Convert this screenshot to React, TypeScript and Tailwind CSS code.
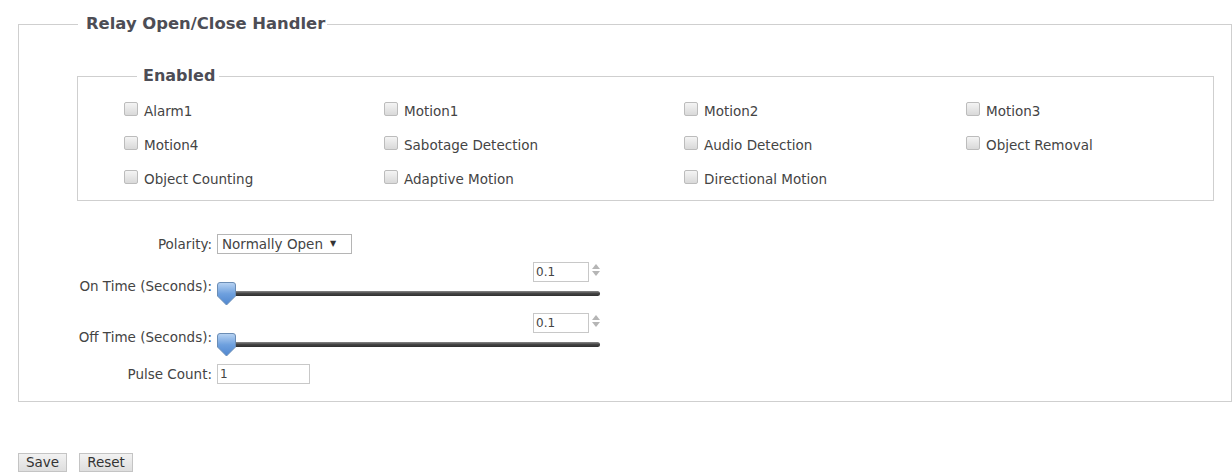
import React from 'react';

const events = [
  'Alarm1',
  'Motion1',
  'Motion2',
  'Motion3',
  'Motion4',
  'Sabotage Detection',
  'Audio Detection',
  'Object Removal',
  'Object Counting',
  'Adaptive Motion',
  'Directional Motion',
];

function Checkbox({ label }: { label: string }) {
  return (
    <label className="flex items-center h-[20px] gap-[6px] text-[#444]">
      <span className="w-[14px] h-[14px] rounded-[2px] border border-[#bcbcbc] bg-gradient-to-b from-[#f4f4f4] to-[#d9d9d9] shrink-0 -mt-[4px]" />
      <span>{label}</span>
    </label>
  );
}

function Spinner() {
  return (
    <span className="flex flex-col items-center gap-[2px] ml-[3px] mt-[-4px]">
      <svg width="8" height="5" viewBox="0 0 8 5">
        <path d="M0 5 L4 0 L8 5 Z" fill="#b5b5b5" />
      </svg>
      <svg width="8" height="5" viewBox="0 0 8 5">
        <path d="M0 0 L4 5 L8 0 Z" fill="#b5b5b5" />
      </svg>
    </span>
  );
}

function Thumb() {
  return (
    <svg width="19" height="24" viewBox="0 0 19 24" className="absolute left-0 top-0">
      <defs>
        <linearGradient id="thumbGrad" x1="0" y1="0" x2="0" y2="1">
          <stop offset="0" stopColor="#b9d4f3" />
          <stop offset="0.5" stopColor="#6ea0de" />
          <stop offset="1" stopColor="#4f86cf" />
        </linearGradient>
      </defs>
      <path
        d="M3 0.5 H16 Q18.5 0.5 18.5 3 V14 L9.5 23 L0.5 14 V3 Q0.5 0.5 3 0.5 Z"
        fill="url(#thumbGrad)"
        stroke="#6b8db5"
      />
    </svg>
  );
}

function TimeSlider({ label, value }: { label: string; value: string }) {
  return (
    <div className="flex items-end gap-[5px]">
      <span className="w-[193px] text-right mb-[11px] leading-[16px]">{label}</span>
      <div className="w-[384px] flex flex-col">
        <div className="flex justify-end items-center h-[20px] pr-[1px]">
          <input
            readOnly
            value={value}
            className="w-[56px] h-[20px] border border-[#c8c8c8] px-[2px] text-[12px] text-[#444] bg-white outline-none"
          />
          <Spinner />
        </div>
        <div className="relative h-[23px] flex items-center pl-[2px] pr-[1px]">
          <div className="w-full h-[5px] rounded-full bg-gradient-to-b from-[#8a8a8a] via-[#444] to-[#2f2f2f]" />
          <Thumb />
        </div>
      </div>
    </div>
  );
}

export default function App() {
  return (
    <div className="min-h-[476px] bg-white pl-[18px] pt-[14px] text-[13.5px] text-[#444] font-['DejaVu_Sans','Verdana',sans-serif]">
      <fieldset className="border border-[#cfcfcf] pb-[16px]">
        <legend className="ml-[59px] pl-[8px] pr-[2px] text-[16.4px] leading-[20px] font-bold text-[#4d4d55]">
          Relay Open/Close Handler
        </legend>

        <fieldset className="mt-[32px] ml-[58px] mr-[17px] border border-[#cfcfcf] pl-[46px] pt-[15px] pb-[11px]">
          <legend className="ml-[13px] pl-[6px] pr-[4px] text-[16px] leading-[20px] font-bold text-[#4d4d55]">
            Enabled
          </legend>
          <div className="grid grid-cols-[260px_300px_282px_1fr] gap-y-[14px]">
            {events.map((e) => (
              <Checkbox key={e} label={e} />
            ))}
          </div>
        </fieldset>

        <div className="mt-[33px] flex flex-col gap-[8px]">
          <div className="flex items-center gap-[5px]">
            <span className="w-[193px] text-right">Polarity:</span>
            <div className="w-[135px] h-[20px] border border-[#b5b5b5] bg-white flex items-center gap-[7px] px-[4px]">
              <span>Normally Open</span>
              <span className="text-[8px] text-[#333]">▼</span>
            </div>
          </div>

          <TimeSlider label="On Time (Seconds):" value="0.1" />
          <TimeSlider label="Off Time (Seconds):" value="0.1" />

          <div className="flex items-center gap-[5px]">
            <span className="w-[193px] text-right">Pulse Count:</span>
            <input
              readOnly
              value="1"
              className="w-[93px] h-[20px] border border-[#c8c8c8] px-[2px] text-[12px] text-[#444] bg-white outline-none"
            />
          </div>
        </div>
      </fieldset>

      <div className="mt-[51px] flex gap-[12px]">
        <button className="h-[19px] px-[7px] border border-[#c4c4c4] bg-gradient-to-b from-[#f2f2f2] to-[#dedede] text-[13.5px] leading-[17px] text-[#333]">
          Save
        </button>
        <button className="h-[19px] px-[7px] border border-[#c4c4c4] bg-gradient-to-b from-[#f2f2f2] to-[#dedede] text-[13.5px] leading-[17px] text-[#333]">
          Reset
        </button>
      </div>
    </div>
  );
}
